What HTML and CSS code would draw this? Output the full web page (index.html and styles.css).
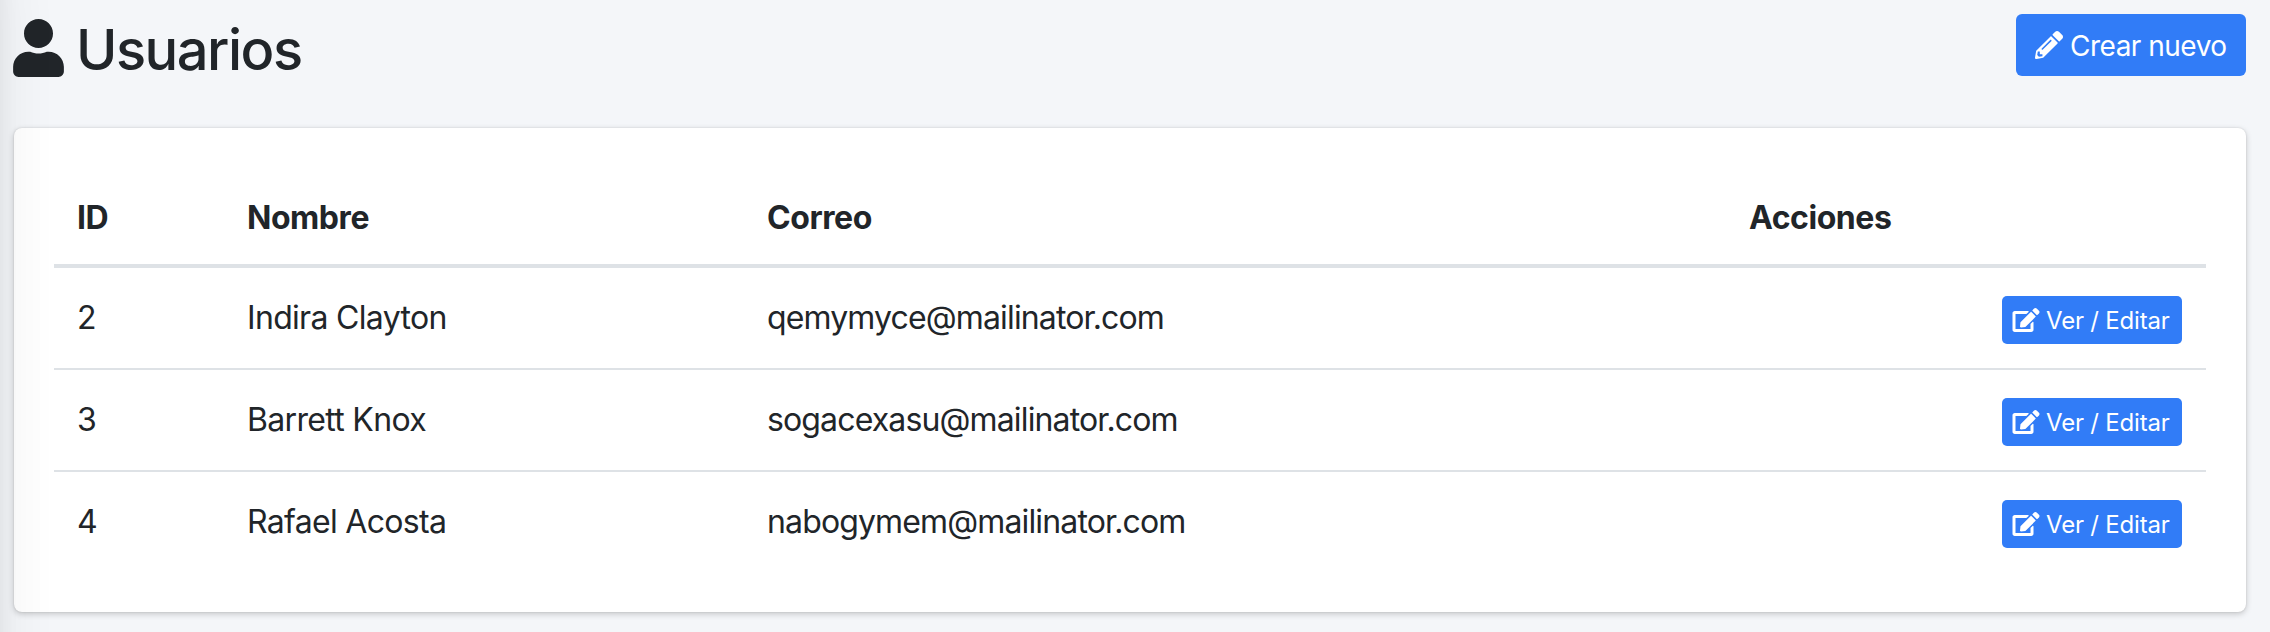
FILE: index.html
```
<!DOCTYPE html>
<html lang="es">
<head>
<meta charset="utf-8">
<title>Usuarios</title>
<link rel="stylesheet" href="styles.css">
</head>
<body>
<svg class="symbols" aria-hidden="true">
  <symbol id="user" viewBox="0 0 448 512"><path d="M224 256c70.700 0 128-57.300 128-128S294.700 0 224 0 96 57.300 96 128s57.300 128 128 128zm89.600 32h-16.700c-22.200 10.200-46.900 16-72.900 16s-50.600-5.800-72.900-16h-16.700C60.200 288 0 348.200 0 422.400V464c0 26.500 21.500 48 48 48h352c26.500 0 48-21.500 48-48v-41.600c0-74.200-60.200-134.400-134.400-134.400z"/></symbol>
  <symbol id="pencil" viewBox="0 0 512 512"><path d="M497.900 142.100l-46.100 46.100c-4.700 4.700-12.300 4.700-17 0l-111-111c-4.700-4.700-4.700-12.300 0-17l46.100-46.100c18.700-18.700 49.100-18.700 67.900 0l60.100 60.100c18.800 18.700 18.800 49.100 0 67.900zM284.200 99.800L21.600 362.400.4 483.900c-2.900 16.400 11.400 30.600 27.800 27.800l121.500-21.300 262.600-262.600c4.700-4.700 4.700-12.300 0-17l-111-111c-4.800-4.700-12.400-4.700-17.100 0zM124.100 339.900c-5.500-5.500-5.500-14.300 0-19.800l154-154c5.500-5.500 14.300-5.500 19.800 0s5.500 14.300 0 19.800l-154 154c-5.500 5.500-14.300 5.500-19.800 0zM88 424h48v36.300l-64.500 11.300-31.100-31.100L51.700 376H88v48z"/></symbol>
  <symbol id="edit" viewBox="0 0 576 512"><path d="M402.600 83.200l90.200 90.200c3.800 3.800 3.800 10 0 13.800L274.400 405.600l-92.800 10.300c-12.400 1.400-22.900-9.100-21.500-21.500l10.300-92.800L388.800 83.200c3.800-3.800 10-3.800 13.800 0zm162-22.900l-48.800-48.800c-15.200-15.200-39.900-15.200-55.200 0l-35.400 35.400c-3.800 3.800-3.800 10 0 13.800l90.200 90.200c3.800 3.800 10 3.800 13.800 0l35.400-35.400c15.200-15.300 15.200-40 0-55.200zM384 346.200V448H64V128h229.800c3.200 0 6.200-1.300 8.500-3.500l40-40c7.600-7.600 2.200-20.500-8.500-20.500H48C21.500 64 0 85.500 0 112v352c0 26.500 21.500 48 48 48h352c26.500 0 48-21.500 48-48V306.200c0-10.700-12.900-16-20.500-8.500l-40 40c-2.200 2.300-3.500 5.300-3.500 8.500z"/></symbol>
</svg>
<header class="page-header">
  <h1 class="title"><svg class="title-icon"><use href="#user"/></svg><span>Usuarios</span></h1>
  <a class="btn"><svg class="btn-icon"><use href="#pencil"/></svg><span>Crear nuevo</span></a>
</header>
<main class="card">
  <table class="table">
    <colgroup><col class="col-id"><col class="col-name"><col class="col-mail"><col></colgroup>
    <thead>
      <tr><th>ID</th><th>Nombre</th><th>Correo</th><th>Acciones</th></tr>
    </thead>
    <tbody>
      <tr><td>2</td><td>Indira Clayton</td><td class="mail">qemymyce@mailinator.com</td><td class="actions"><a class="btn btn-sm"><svg class="btn-icon"><use href="#edit"/></svg><span>Ver / Editar</span></a></td></tr>
      <tr><td>3</td><td>Barrett Knox</td><td class="mail">sogacexasu@mailinator.com</td><td class="actions"><a class="btn btn-sm"><svg class="btn-icon"><use href="#edit"/></svg><span>Ver / Editar</span></a></td></tr>
      <tr><td>4</td><td>Rafael Acosta</td><td class="mail">nabogymem@mailinator.com</td><td class="actions"><a class="btn btn-sm"><svg class="btn-icon"><use href="#edit"/></svg><span>Ver / Editar</span></a></td></tr>
    </tbody>
  </table>
</main>
<div class="edge-shadow"></div>
</body>
</html>
```
FILE: styles.css
```
* { box-sizing: border-box; }
body {
  margin: 0;
  height: 632px;
  overflow: hidden;
  padding: 14px 24px 0 14px;
  background: #f4f6f9;
  color: #212529;
  font: 420 32px/48px Inter, "Liberation Sans", sans-serif;
  letter-spacing: -0.68px;
}
.symbols { display: none; }
svg { fill: currentColor; flex: none; }
.page-header {
  display: flex;
  justify-content: space-between;
  align-items: flex-start;
  height: 114px;
}
.title {
  display: flex;
  margin: 0;
  font-size: 56px;
  font-weight: 540;
  line-height: 73px;
  letter-spacing: -1.5px;
}
.title-icon { width: 51px; height: 58px; margin: 5px 12px 0 -1px; }
.btn {
  display: flex;
  align-items: center;
  width: 230px;
  height: 62px;
  padding-left: 19px;
  border-radius: 6px;
  background: #317cf7;
  color: #fff;
  font-size: 28px;
  letter-spacing: -0.5px;
  white-space: nowrap;
}
.btn span { padding-top: 1px; }
.btn-icon { width: 28px; height: 28px; margin-right: 7px; }
.card {
  height: 484px;
  padding: 40px;
  border-radius: 8px;
  background: #fff;
  box-shadow: 0 0 2px rgba(0, 0, 0, .125), 0 2px 6px rgba(0, 0, 0, .2);
}
.table {
  width: 100%;
  table-layout: fixed;
  border-spacing: 0;
}
.col-id { width: 169px; }
.col-name { width: 520px; }
.col-mail { width: 982px; }
th, td {
  height: 102px;
  padding: 26px 24px 0 23px;
  border-top: 2px solid #dee2e6;
  text-align: left;
  vertical-align: top;
}
th + th, td + td { padding-left: 24px; }
th {
  height: 100px;
  border-top: 0;
  border-bottom: 4px solid #dee2e6;
  font-weight: 700;
  letter-spacing: -0.45px;
}
tbody tr:first-child td { height: 100px; border-top: 0; }
.mail { letter-spacing: -0.86px; }
td.actions { padding-top: 28px; }
tbody tr + tr td.actions { padding-top: 28px; }
.btn-sm {
  width: 180px;
  height: 48px;
  margin-left: auto;
  padding-left: 10px;
  border-radius: 5px;
  font-size: 24px;
  letter-spacing: -0.2px;
}
.btn-sm .btn-icon { height: 24px; width: 28px; margin-right: 6px; }
/* Soft shadow cast over the content from the adjoining sidebar */
.edge-shadow {
  position: absolute;
  top: -60px;
  bottom: -60px;
  left: -20px;
  width: 20px;
  box-shadow: 0 28px 56px rgba(0, 0, 0, .12), 0 20px 20px rgba(0, 0, 0, .07);
  pointer-events: none;
}
```
